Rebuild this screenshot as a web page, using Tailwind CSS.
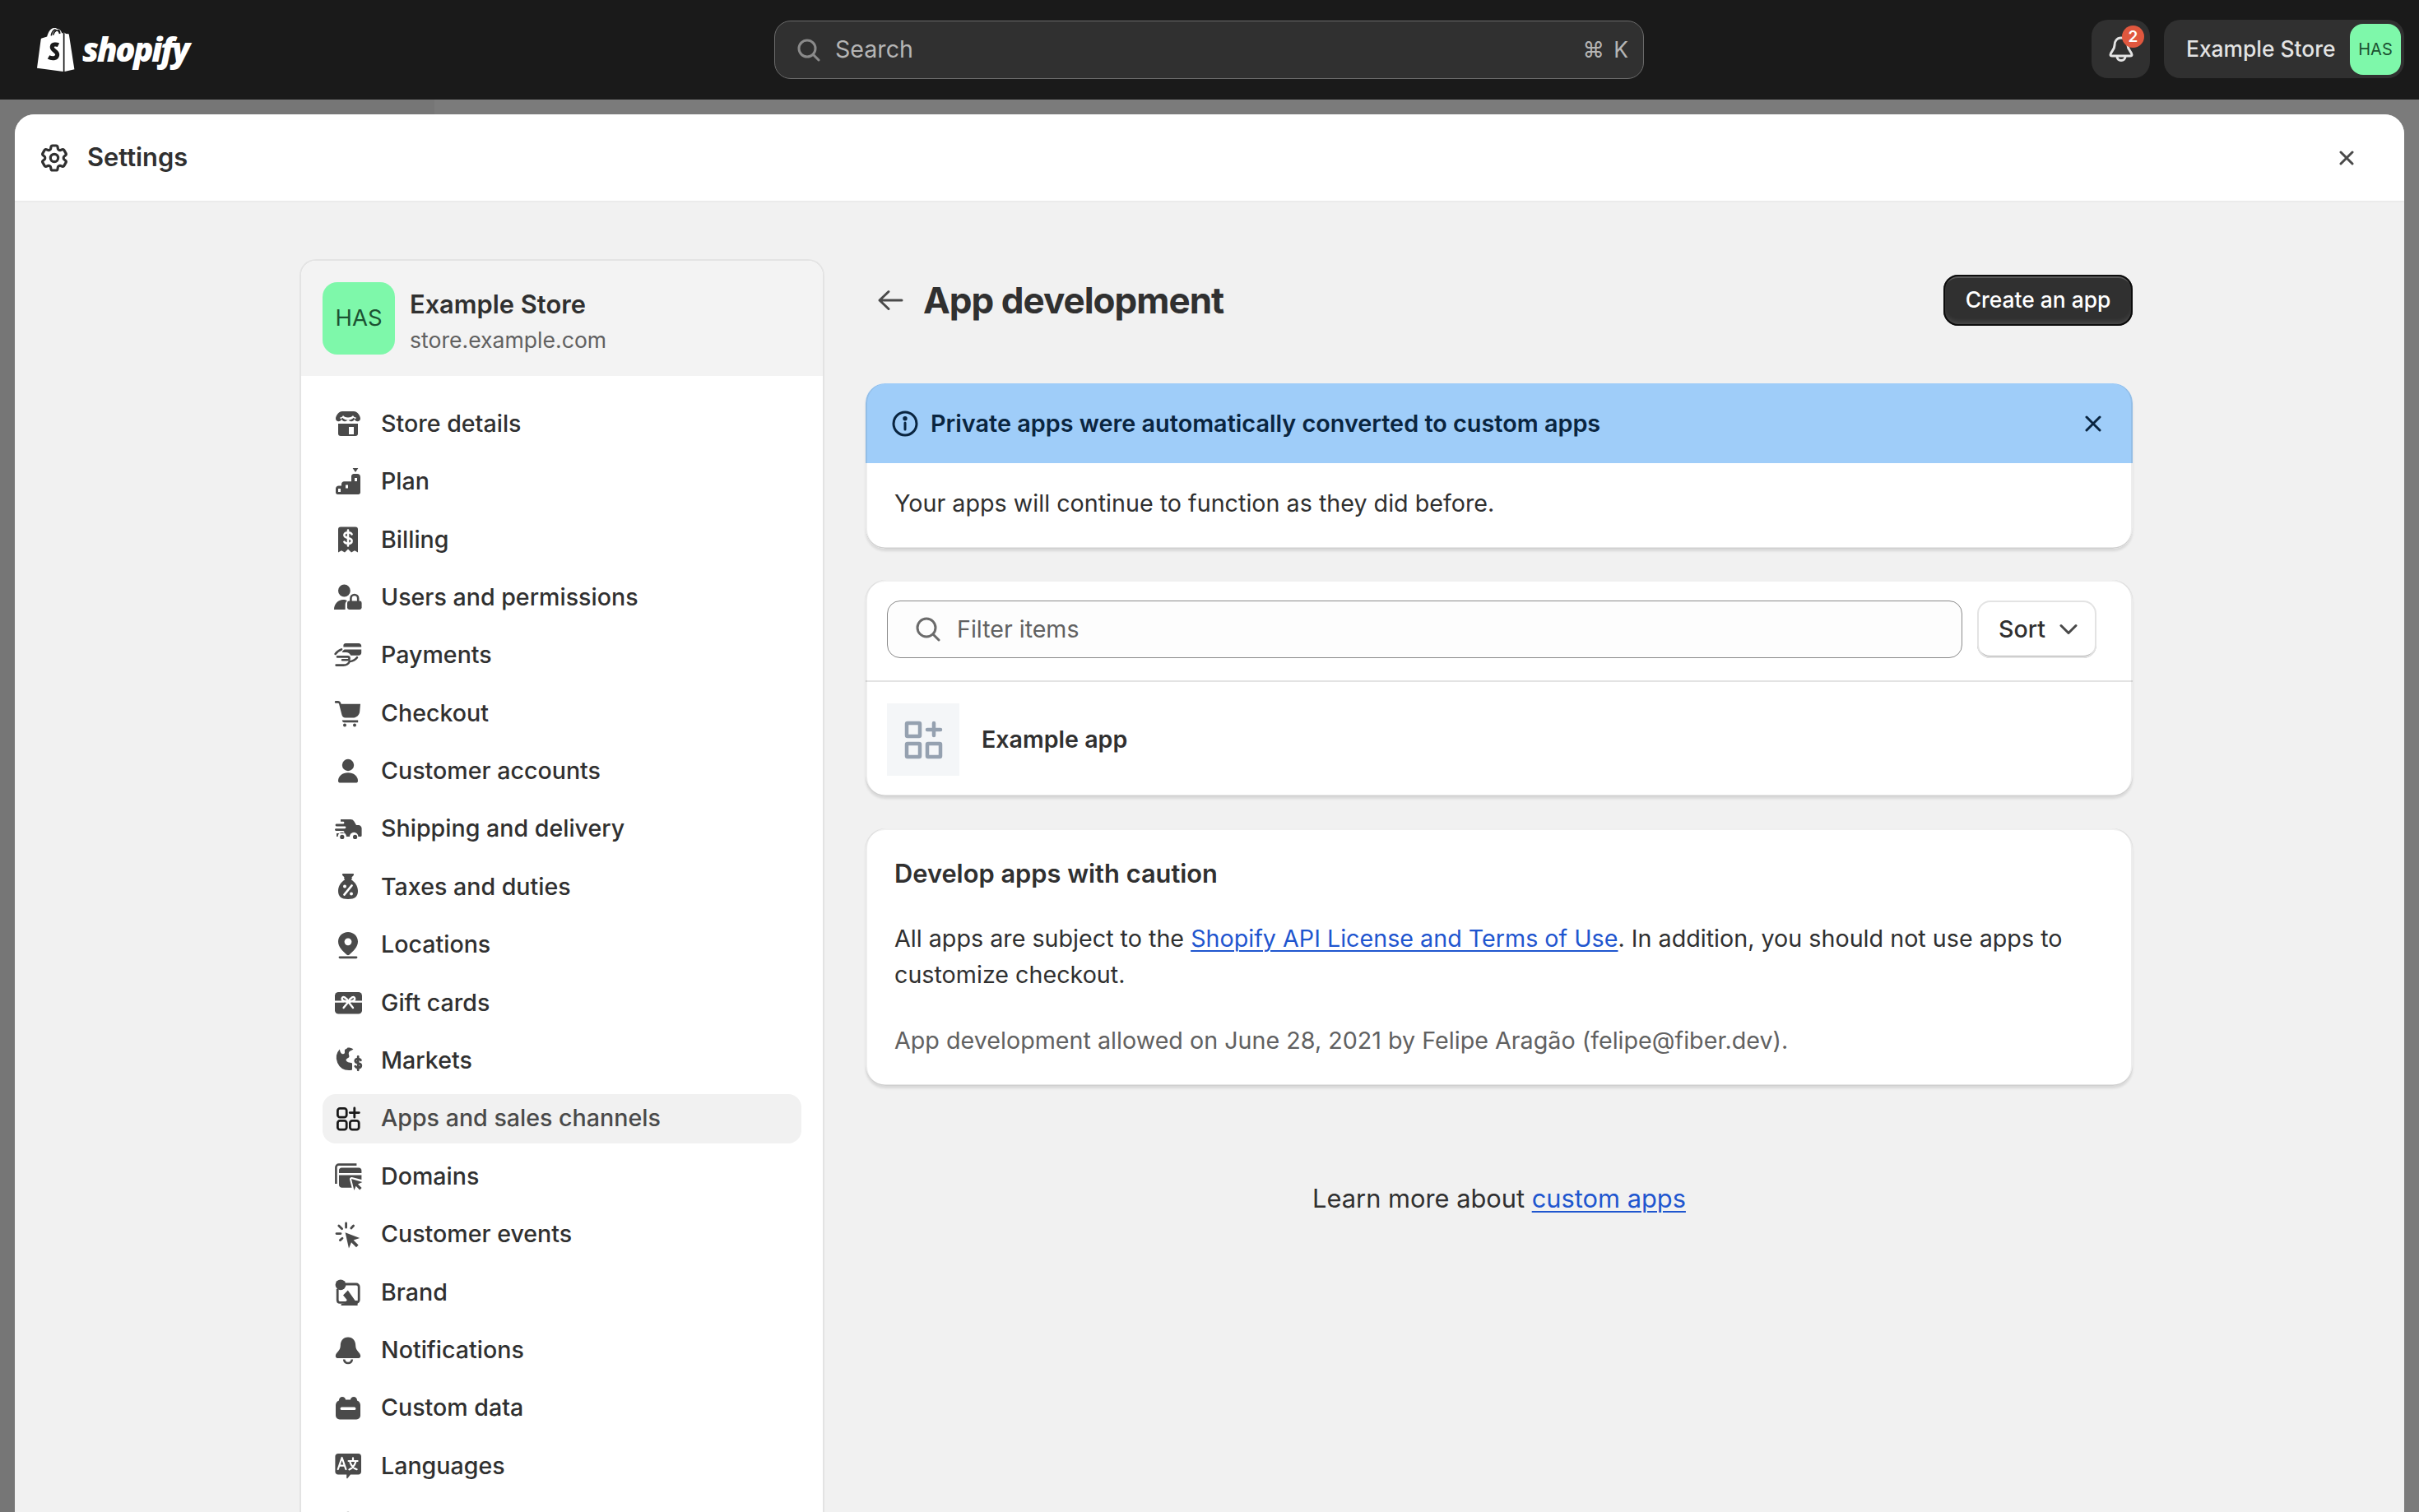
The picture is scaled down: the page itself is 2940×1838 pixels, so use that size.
<!DOCTYPE html>
<html lang="en">
<head>
<meta charset="utf-8">
<title>App development</title>
<script src="https://cdn.jsdelivr.net/npm/@tailwindcss/browser@4"></script>
</head>
<body class="w-[2940px] h-[1838px] overflow-hidden flex flex-col font-['Inter',sans-serif] text-[#303030] bg-[linear-gradient(to_right,#767676_528px,#7b7b7b_528px)]">

<header class="h-[121px] shrink-0 bg-[#1a1a1a] flex items-center relative">
  <div class="flex items-center pl-[44px] w-[941px] shrink-0">
    <svg class="w-[47px] h-[53px] -mt-[1px]" viewBox="0 0 47 53"><path fill="#fff" d="M34 5.800l-2.600.8C30.600 4 29 .9 25.400.9c-.1 0-.3 0-.4.1C24.300.100 23.300-.200 22.500-.100 16.800-.100 14 7 13.200 10.600l-5.600 1.700c-1.700.5-1.800.6-2 2.200L1 48.700l31.800 4.300V5.700z"/><path fill="#fff" d="M34.500 53L46.500 50.200c0 0-6.600-42.200-6.700-42.500-.1-.3-.3-.5-.6-.5l-3.200-.1-1.500-1.500z"/><path fill="none" stroke="#1a1a1a" stroke-width="1.600" d="M18.200 9.300C19 5.600 21 2.300 23.600 1.800M20.500 8.600c.8-2.800 2.300-5 4.300-5.900 2.100-.2 3.200 2.300 3.800 4.300M28.800 6.800c0-1.800-.5-3.600-1.600-4.900"/><path fill="none" stroke="#1a1a1a" stroke-width="5" d="M27 20.800c-2-1-7.400-1.700-7.800 2.200-.4 4.400 7 5 6.500 9.800-.5 4.700-6.800 4.800-10.700 2.600"/></svg>
    <span class="ml-[9px] -mt-[2px] text-[40px] leading-none font-[800] italic text-white tracking-[-2.300px] font-['Open_Sans',sans-serif]">shopify</span>
  </div>
  <div class="w-[1057px] h-[71px] rounded-[20px] bg-[#303030] border border-[#6b6b6b] flex items-center pl-[27px] pr-[16px] text-[#b5b5b5] text-[28.600px]">
    <svg class="w-[28px] h-[28px] mr-[18px]" viewBox="0 0 28 28" fill="none" stroke="#8a8a8a" stroke-width="3" stroke-linecap="round"><circle cx="12" cy="12" r="10"/><path d="M19.500 19.500L26 26"/></svg>
    <span class="-mt-[1px]">Search</span>
    <span class="ml-auto text-[26.400px] tracking-[2px]">⌘ K</span>
  </div>
  <div class="absolute left-[2542px] top-[24px] w-[71px] h-[71px] rounded-[20px] bg-[#303030] flex items-center justify-center">
    <svg class="w-[40px] h-[40px]" viewBox="0 0 40 40" fill="none" stroke="#e3e3e3" stroke-width="3" stroke-linejoin="round"><path d="M20 6c-5.500 0-8 4.500-8 9 0 6-5 8-5 11.500 0 1 .8 1.500 2 1.500h22c1.200 0 2-.5 2-1.500C33 23 28 21 28 15c0-4.500-2.500-9-8-9z"/><path d="M15 28.500c0 3 2.200 5 5 5s5-2 5-5"/></svg>
    <span class="absolute left-[37px] top-[7px] w-[27px] h-[27px] rounded-full bg-[#e0573e] text-white text-[19px] font-semibold leading-[27px] text-center">2</span>
  </div>
  <div class="absolute left-[2630px] top-[24px] w-[292px] h-[71px] rounded-[20px] bg-[#303030] flex items-center pl-[27px] pr-[4px] text-[#e3e3e3] text-[26.400px] font-[500]">
    <span>Example Store</span>
    <span class="ml-auto w-[62px] h-[62px] rounded-[16px] bg-[#7ef8aa] text-[#1c5232] text-[20px] font-[400] flex items-center justify-center">HAS</span>
  </div>
</header>

<div class="flex-1 min-h-0 pt-[18px] px-[18px]">
  <div class="h-full rounded-t-[24px] bg-[#f1f1f1] overflow-hidden flex flex-col">
    <div class="h-[107px] shrink-0 bg-white border-b-2 border-[#ebebeb] flex items-center pl-[28px] pr-[61px]">
      <svg class="w-[40px] h-[40px]" viewBox="0 0 24 24" fill="none" stroke="#303030" stroke-width="1.900"><path stroke-linejoin="round" d="M9.594 3.940c.09-.542.56-.94 1.110-.94h2.593c.55 0 1.020.398 1.110.94l.213 1.281c.063.374.313.686.645.870.074.04.147.083.22.127.325.196.72.257 1.075.124l1.217-.456a1.125 1.125 0 0 1 1.370.49l1.296 2.247a1.125 1.125 0 0 1-.26 1.431l-1.003.827c-.293.241-.438.613-.43.992a7.723 7.723 0 0 1 0 .255c-.008.378.137.75.43.991l1.004.827c.424.35.534.955.26 1.430l-1.298 2.247a1.125 1.125 0 0 1-1.369.491l-1.217-.456c-.355-.133-.75-.072-1.076.124a6.470 6.470 0 0 1-.22.128c-.331.183-.581.495-.644.869l-.213 1.281c-.09.543-.56.94-1.110.94h-2.594c-.55 0-1.019-.398-1.110-.94l-.213-1.281c-.062-.374-.312-.686-.644-.87a6.520 6.520 0 0 1-.22-.127c-.325-.196-.72-.257-1.076-.124l-1.217.456a1.125 1.125 0 0 1-1.369-.49l-1.297-2.247a1.125 1.125 0 0 1 .26-1.431l1.004-.827c.292-.24.437-.613.43-.991a6.932 6.932 0 0 1 0-.255c.007-.38-.138-.751-.43-.992l-1.004-.827a1.125 1.125 0 0 1-.26-1.430l1.297-2.247a1.125 1.125 0 0 1 1.370-.491l1.216.456c.356.133.751.072 1.076-.124.072-.044.146-.086.22-.128.332-.183.582-.495.644-.869l.214-1.280Z"/><circle cx="12" cy="12" r="2.800"/></svg>
      <span class="ml-[20px] text-[30.800px] font-[600]">Settings</span>
      <svg class="ml-auto w-[18px] h-[18px]" viewBox="0 0 18 18" stroke="#4a4a4a" stroke-width="3" stroke-linecap="round"><path d="M2 2l14 14M16 2L2 16"/></svg>
    </div>

    <div class="flex-1 min-h-0 flex pl-[346px] pt-[69px] gap-[50px]">
      <aside class="w-[638px] shrink-0 bg-white rounded-t-[20px] border-x-2 border-t-2 border-[#e3e3e3] overflow-hidden self-stretch h-[1600px]">
        <div class="h-[140px] bg-[#f3f3f3] flex items-center pl-[26px] gap-[18px]">
          <span class="w-[88px] h-[88px] rounded-[18px] bg-[#7ef8aa] text-[#1c5232] text-[27.500px] flex items-center justify-center">HAS</span>
          <div class="flex flex-col gap-[5px] pt-[7px]">
            <span class="text-[30.800px] leading-[40px] font-[600]">Example Store</span>
            <span class="text-[26.600px] leading-[36px] text-[#616161]">store.example.com</span>
          </div>
        </div>
        <nav class="flex flex-col gap-[10px] pt-[28px] px-[26px]">

          <a class="h-[60.400px] rounded-[16px] flex items-center pl-[11px] gap-[20px] text-[28.600px] font-[500]">
            <svg class="w-[40px] h-[40px] shrink-0 text-[#4a4a4a]" viewBox="0 0 20 20" fill="currentColor"><path d="M6.500 2.500h7c2 0 4 2.600 4 4.500 0 1-.8 1.600-1.700 1.600-.9 0-1.600-.5-1.900-1.400-.4.9-1 1.400-1.900 1.400s-1.600-.5-2-1.400c-.4.9-1.100 1.400-2 1.400s-1.500-.5-1.900-1.400c-.3.9-1 1.400-1.900 1.400-.9 0-1.700-.6-1.700-1.600 0-1.900 2-4.500 4-4.500z"/><path d="M4 10h12v6a1.500 1.500 0 0 1-1.500 1.500h-9A1.500 1.500 0 0 1 4 16z"/><path fill="#fff" d="M5 6.200c1 .2 1.500-.5 2-1.200.6.700 1.200 1.200 3 1.200 1.800 0 2.400-.5 3-1.200.5.700 1 1.400 2 1.200l-.5 1-1.200-.8c-.6.900-2 1.400-3.300 1.400S7.300 7.300 6.700 6.400l-1.200.8zM10.500 12h3v4.500h-3z"/></svg>
            Store details</a>

          <a class="h-[60.400px] rounded-[16px] flex items-center pl-[11px] gap-[20px] text-[28.600px] font-[500]">
            <svg class="w-[40px] h-[40px] shrink-0 text-[#4a4a4a]" viewBox="0 0 20 20" fill="currentColor"><path d="M12.800 1.500h3.400L14.500 4z"/><path fill-rule="evenodd" d="M13.500 5h2a2 2 0 0 1 2 2v9.300c0 .7-.5 1.200-1.200 1.200H3.700c-.7 0-1.200-.5-1.200-1.200V14c0-1 .8-1.800 1.800-1.800H6v-1c0-.9.7-1.600 1.600-1.600H12V6.500C12 5.700 12.700 5 13.500 5zM14 7.500v2h1.500v-2zM8.500 11.700v2H10v-2zM4 14v2h1.500v-2z"/></svg>
            Plan</a>

          <a class="h-[60.400px] rounded-[16px] flex items-center pl-[11px] gap-[20px] text-[28.600px] font-[500]">
            <svg class="w-[40px] h-[40px] shrink-0 text-[#4a4a4a]" viewBox="0 0 20 20" fill="currentColor"><path d="M5.500 2.300h9A1.500 1.500 0 0 1 16 3.800v14l-2-1.200-2 1.200-2-2-2 2-2-1.200-2 1.200v-14a1.500 1.500 0 0 1 1.500-1.500z"/><path fill="none" stroke="#fff" stroke-width="1.300" stroke-linecap="round" d="M12.300 6.700c-.3-.7-1.200-1.100-2.300-1.100-1.300 0-2.300.6-2.300 1.700 0 2.400 4.600 1 4.600 3.400 0 1.100-1 1.700-2.300 1.700-1.100 0-2-.4-2.300-1.100M10 4.300v9.400"/></svg>
            Billing</a>

          <a class="h-[60.400px] rounded-[16px] flex items-center pl-[11px] gap-[20px] text-[28.600px] font-[500]">
            <svg class="w-[40px] h-[40px] shrink-0 text-[#4a4a4a]" viewBox="0 0 20 20" fill="currentColor"><circle cx="7.700" cy="6" r="3.700"/><path d="M1.500 17.500c0-3.500 2.400-6 5.600-6 1 0 1.700.2 2.400.6-.7.500-1.200 1.300-1.200 2.400v3z"/><path fill="none" stroke="currentColor" stroke-width="1.300" d="M11.700 12.500V10.700a2.200 2.200 0 0 1 4.400 0v1.800"/><rect x="9.500" y="12.300" width="8.800" height="5.200" rx="1.200"/></svg>
            Users and permissions</a>

          <a class="h-[60.400px] rounded-[16px] flex items-center pl-[11px] gap-[20px] text-[28.600px] font-[500]">
            <svg class="w-[40px] h-[40px] shrink-0 text-[#4a4a4a]" viewBox="0 0 20 20" fill="currentColor"><path d="M7.200 3.800c0-.7.600-1.300 1.300-1.300h8c.9 0 1.600.7 1.600 1.600v.7H7.200zM7.800 6.300h10.300v2c0 .9-.7 1.600-1.600 1.600h-4.900c-.4-1.100-1.500-1.900-2.800-1.900H6.300c.3-.7.800-1.300 1.500-1.700z"/><path fill="none" stroke="currentColor" stroke-width="1.300" stroke-linecap="round" stroke-linejoin="round" d="M2.300 9c1-1.500 2.200-2.300 3.700-2.800M3.500 10.700h6.300c1.300 0 1.300 1.900 0 1.900H6.500M11 13.500c2-.1 3.200-.7 4.500-2.400M2.800 15.800h4.400c1.700 0 3-.7 3.800-2.300"/></svg>
            Payments</a>

          <a class="h-[60.400px] rounded-[16px] flex items-center pl-[11px] gap-[20px] text-[28.600px] font-[500]">
            <svg class="w-[40px] h-[40px] shrink-0 text-[#4a4a4a]" viewBox="0 0 20 20" fill="currentColor"><path d="M2.600 2.500h1.300c.8 0 1.500.5 1.700 1.300l.2.600h11.700l-.4 4.600c-.2 2.200-2 3.800-4.200 3.800H8.400c-1.100 0-2-.8-2.200-1.900L4.500 4.300c-.1-.2-.3-.4-.6-.4H2.600a.7.7 0 0 1 0-1.400z"/><path d="M6.400 14.300h9.700v1.300H7.500a1.200 1.200 0 0 1-1.100-1.300z"/><circle cx="8" cy="17.300" r="1"/><circle cx="14" cy="17.300" r="1"/></svg>
            Checkout</a>

          <a class="h-[60.400px] rounded-[16px] flex items-center pl-[11px] gap-[20px] text-[28.600px] font-[500]">
            <svg class="w-[40px] h-[40px] shrink-0 text-[#4a4a4a]" viewBox="0 0 20 20" fill="currentColor"><circle cx="10" cy="6" r="3.600"/><path d="M4 15.600c0-3 2.700-5 6-5s6 2 6 5c0 .8-.5 1.200-1.300 1.200H5.300c-.8 0-1.300-.4-1.300-1.200z"/></svg>
            Customer accounts</a>

          <a class="h-[60.400px] rounded-[16px] flex items-center pl-[11px] gap-[20px] text-[28.600px] font-[500]">
            <svg class="w-[40px] h-[40px] shrink-0 text-[#4a4a4a]" viewBox="0 0 20 20" fill="currentColor"><path d="M5.500 4h6c1 0 1.700.4 2.200 1.300l1.300 2.200h1.300c1.100 0 2 .9 2 2v4.200c0 .5-.4.8-.8.8h-1.300a2.600 2.600 0 0 0-5.200 0H9a2.600 2.600 0 0 0-5.200 0H3V12.500h4a.7.700 0 0 0 0-1.500H2.700a.7.700 0 0 1 0-1.400H8a.7.700 0 0 0 0-1.400H3a.7.700 0 0 1 0-1.400h4a.7.700 0 0 0 0-1.400H5.500z"/><circle cx="6.400" cy="14.700" r="1.300"/><circle cx="14.300" cy="14.700" r="1.300"/></svg>
            Shipping and delivery</a>

          <a class="h-[60.400px] rounded-[16px] flex items-center pl-[11px] gap-[20px] text-[28.600px] font-[500]">
            <svg class="w-[40px] h-[40px] shrink-0 text-[#4a4a4a]" viewBox="0 0 20 20" fill="currentColor"><path d="M7 2h6c.6 0 .7.7.3 1.100L12.200 4.300c.3.3.3.700 0 1L12 5.800c2.200 1.300 4 3.800 4 6.700 0 3.500-2 5-6 5s-6-1.500-6-5c0-2.900 1.800-5.400 4-6.700l-.2-.5c-.3-.3-.3-.7 0-1L6.700 3.100C6.300 2.700 6.400 2 7 2z"/><path fill="none" stroke="#fff" stroke-width="1.300" stroke-linecap="round" d="M12.300 9.200l-4.600 5.600"/><circle cx="8" cy="9.800" r="1" fill="#fff"/><circle cx="12" cy="14.200" r="1" fill="#fff"/></svg>
            Taxes and duties</a>

          <a class="h-[60.400px] rounded-[16px] flex items-center pl-[11px] gap-[20px] text-[28.600px] font-[500]">
            <svg class="w-[40px] h-[40px] shrink-0 text-[#4a4a4a]" viewBox="0 0 20 20" fill="currentColor"><path fill-rule="evenodd" d="M10 2c3.300 0 6 2.500 6 5.800 0 3.300-2.900 6-5.300 8.100-.4.300-1 .3-1.400 0C6.900 13.800 4 11.100 4 7.800 4 4.500 6.700 2 10 2zm0 3.700a2.200 2.200 0 1 0 0 4.400 2.200 2.200 0 0 0 0-4.400z"/><rect x="4.300" y="16.700" width="11.400" height="1.400" rx=".7"/></svg>
            Locations</a>

          <a class="h-[60.400px] rounded-[16px] flex items-center pl-[11px] gap-[20px] text-[28.600px] font-[500]">
            <svg class="w-[40px] h-[40px] shrink-0 text-[#4a4a4a]" viewBox="0 0 20 20" fill="currentColor"><rect x="2" y="3.500" width="16.500" height="13.300" rx="2.200"/><path fill="none" stroke="#fff" stroke-width="1.200" stroke-linecap="round" stroke-linejoin="round" d="M2 9.300h5.500M13 9.300h5.500M10.200 9.500c-1.200-2.800-3.600-3.900-3.900-2.200-.2 1.300 1.900 2 3.900 2.200zm0 0c1.200-2.800 3.600-3.900 3.900-2.200.2 1.300-1.900 2-3.900 2.200zm0 0L7.300 13M10.200 9.500L13 13"/></svg>
            Gift cards</a>

          <a class="h-[60.400px] rounded-[16px] flex items-center pl-[11px] gap-[20px] text-[28.600px] font-[500]">
            <svg class="w-[40px] h-[40px] shrink-0 text-[#4a4a4a]" viewBox="0 0 20 20" fill="currentColor"><path d="M10 2.300c1.200 0 2.300.3 3.200.9-.9.900-2.300.9-2.700 1.900-.4 1 .3 1.700.2 2.700-.1.700-1.200.9-1.700 1.500-.6.700.2 1.500 1 1.800.8.300 1.700.2 2.500.6v4c-.6.200-1.300.3-2 .3a7.600 7.600 0 0 1-5.600-12.700c.3 1 .3 2.100 1.300 2.700.6.300 1.400.1 1.700-.4.300-.6-.1-1.300.1-1.900.2-.6.900-.7 1.300-1 .3-.2.400-.3.500-.4z"/><path fill="none" stroke="currentColor" stroke-width="1.400" stroke-linecap="round" d="M17.700 9.900c-.3-.5-.9-.8-1.600-.8-1 0-1.700.5-1.700 1.300 0 1.800 3.500.8 3.500 2.700 0 .9-.8 1.400-1.800 1.400-.7 0-1.400-.3-1.700-.9M16.100 7.700v8.200"/></svg>
            Markets</a>

          <a class="h-[60.400px] rounded-[16px] bg-[#f1f1f1] flex items-center pl-[11px] gap-[20px] text-[28.600px] font-[500] text-[#4a4a4a]">
            <svg class="w-[40px] h-[40px] shrink-0" viewBox="0 0 20 20" fill="none" stroke="#1a1a1a" stroke-width="1.400" stroke-linecap="round"><rect x="3.700" y="3.700" width="5.400" height="5.400" rx="1.400"/><rect x="3.700" y="11.200" width="5.400" height="5.400" rx="1.400"/><rect x="11.200" y="11.200" width="5.400" height="5.400" rx="1.400"/><path d="M13.900 3.500v5.600M11.100 6.300h5.600"/></svg>
            Apps and sales channels</a>

          <a class="h-[60.400px] rounded-[16px] flex items-center pl-[11px] gap-[20px] text-[28.600px] font-[500]">
            <svg class="w-[40px] h-[40px] shrink-0 text-[#4a4a4a]" viewBox="0 0 20 20" fill="currentColor"><path fill="none" stroke="currentColor" stroke-width="1.300" d="M2.700 14.500V4.500c0-1 .7-1.700 1.700-1.700h10.800"/><path d="M6 4.800h10.500c1 0 1.700.8 1.700 1.700V8H4.500V6.300c0-.8.700-1.500 1.500-1.500z"/><path d="M4.500 9.300h13.700v2.700l-5.800-1.500c-.8-.2-1.600.6-1.400 1.400l1.300 5H6.300c-1 0-1.800-.8-1.800-1.800z"/><path d="M12 11.500l6.700 2-2.700 1.200 2.300 2.300-1.200 1.200-2.300-2.300-1.100 2.600z"/></svg>
            Domains</a>

          <a class="h-[60.400px] rounded-[16px] flex items-center pl-[11px] gap-[20px] text-[28.600px] font-[500]">
            <svg class="w-[40px] h-[40px] shrink-0 text-[#4a4a4a]" viewBox="0 0 20 20" fill="currentColor"><path d="M8.300 8.600l8.800 3.400-3.800 1.300 3 3-1.300 1.300-3-3-1.500 3.600z"/><path fill="none" stroke="currentColor" stroke-width="1.400" stroke-linecap="round" d="M8.800 3v2.600M4.400 4.500l1.900 1.900M3 9.300h2.500M13.300 4.500l-1.400 1.500M5.200 13.300l1.300-1.200"/></svg>
            Customer events</a>

          <a class="h-[60.400px] rounded-[16px] flex items-center pl-[11px] gap-[20px] text-[28.600px] font-[500]">
            <svg class="w-[40px] h-[40px] shrink-0 text-[#4a4a4a]" viewBox="0 0 20 20" fill="currentColor"><circle cx="5.500" cy="5.400" r="3.200"/><path fill="none" stroke="currentColor" stroke-width="1.400" stroke-linejoin="round" d="M8 5h7c.9 0 1.600.7 1.600 1.600v8c0 .9-.7 1.600-1.600 1.600H5c-.8 0-1.400-.7-1.400-1.600V8"/><path d="M9.900 8.800l4.400 6.200h1.500v3H5.800v-.9l2.100-.5c.3-.7 1-1.300 1.500-2L7 11.800z"/></svg>
            Brand</a>

          <a class="h-[60.400px] rounded-[16px] flex items-center pl-[11px] gap-[20px] text-[28.600px] font-[500]">
            <svg class="w-[40px] h-[40px] shrink-0 text-[#4a4a4a]" viewBox="0 0 20 20" fill="currentColor"><path d="M10 2.300c-3 0-4.600 2.400-4.600 5.100 0 3.300-3 4.200-3 6.300 0 .8.700 1.300 1.700 1.300h11.800c1 0 1.700-.5 1.700-1.300 0-2.100-3-3-3-6.300 0-2.700-1.600-5.100-4.600-5.100z"/><path fill="none" stroke="currentColor" stroke-width="1.300" d="M7.600 15.800c0 1.200 1 2.200 2.400 2.200s2.400-1 2.400-2.200"/></svg>
            Notifications</a>

          <a class="h-[60.400px] rounded-[16px] flex items-center pl-[11px] gap-[20px] text-[28.600px] font-[500]">
            <svg class="w-[40px] h-[40px] shrink-0 text-[#4a4a4a]" viewBox="0 0 20 20" fill="currentColor"><path d="M6.500 3c1.100 0 1.900.7 2 1.800h3c.1-1.100.9-1.800 2-1.800s2 .9 2 2v.2c1.100.4 2 1.400 2 2.800v6.300c0 1.400-1 2.400-2.400 2.400H4.900c-1.400 0-2.400-1-2.400-2.400V8c0-1.400.9-2.400 2-2.800V5c0-1.100.9-2 2-2z"/><rect x="5.300" y="9.300" width="9.400" height="1.700" rx=".8" fill="#fff"/></svg>
            Custom data</a>

          <a class="h-[60.400px] rounded-[16px] flex items-center pl-[11px] gap-[20px] text-[28.600px] font-[500]">
            <svg class="w-[40px] h-[40px] shrink-0 text-[#4a4a4a]" viewBox="0 0 20 20" fill="currentColor"><path d="M4 2.500h12.300c1 0 1.700.8 1.700 1.700v9.300c0 1-.8 1.800-1.700 1.800h-4.800L9.700 17.500c-.2.200-.6.100-.6-.2v-2H4c-1 0-1.800-.8-1.800-1.800V4.200c0-1 .8-1.700 1.800-1.700z"/><path fill="none" stroke="#fff" stroke-width="1.100" stroke-linecap="round" stroke-linejoin="round" d="M3.900 12l2.400-7 2.400 7M4.800 9.800h3.100M10.300 7h5.500M13 5.200V7M14.700 7c-.5 2.700-2 4.300-4 5.200M11.300 7.800c.6 2 2 3.600 4 4.300"/></svg>
            Languages</a>

          <div class="h-[60.400px] flex items-center pl-[11px]">
            <svg class="w-[40px] h-[40px] shrink-0 text-[#4a4a4a]" viewBox="0 0 20 20" fill="currentColor"><circle cx="10" cy="6" r="3.600"/></svg>
          </div>
        </nav>
      </aside>

      <main class="w-[1540px] shrink-0 pt-[19px]">
        <div class="h-[62px] flex items-center">
          <svg class="ml-[14px] w-[32px] h-[32px] text-[#4a4a4a]" viewBox="0 0 32 32" fill="none" stroke="currentColor" stroke-width="3" stroke-linecap="round" stroke-linejoin="round"><path d="M30 16H3M14 5.500L3 16l11 10.500"/></svg>
          <h1 class="ml-[24px] text-[44px] font-[650] tracking-[-1px]">App development</h1>
          <button class="ml-auto w-[230px] h-[62px] rounded-[18px] bg-[#303030] text-white text-[26.400px] font-[500] shadow-[inset_0_0_0_2px_#0c0c0c,inset_0_4px_0_0_rgba(255,255,255,.2),inset_0_-6px_6px_-2px_rgba(255,255,255,.16)]">Create an app</button>
        </div>

        <section class="mt-[70px] h-[201px] rounded-[24px] bg-white overflow-hidden relative shadow-[0_3px_3px_rgba(0,0,0,.1)] after:absolute after:inset-0 after:rounded-[24px] after:pointer-events-none after:shadow-[inset_0_-1.500px_0_0_#cfcfcf,inset_2px_0_0_0_rgba(0,0,0,.07),inset_-2px_0_0_0_rgba(0,0,0,.07)]">
          <div class="h-[97px] bg-[#9fcdf9] flex items-center pl-[32px] pr-[38px] text-[#0a2540]">
            <svg class="w-[32px] h-[32px]" viewBox="0 0 32 32" fill="none" stroke="currentColor" stroke-width="3" stroke-linecap="round"><circle cx="16" cy="16" r="14"/><path d="M16 15v8"/><circle cx="16" cy="9.800" r="1.200" fill="currentColor"/></svg>
            <span class="ml-[15px] text-[28.800px] font-[600]">Private apps were automatically converted to custom apps</span>
            <svg class="ml-auto w-[20px] h-[20px]" viewBox="0 0 20 20" stroke="currentColor" stroke-width="3" stroke-linecap="round"><path d="M2 2l16 16M18 2L2 18"/></svg>
          </div>
          <p class="pl-[35px] pt-[27px] text-[28.700px] leading-[44px]">Your apps will continue to function as they did before.</p>
        </section>

        <section class="mt-[38px] h-[263px] rounded-[24px] bg-white relative shadow-[0_3px_3px_rgba(0,0,0,.1)] after:absolute after:inset-0 after:rounded-[24px] after:pointer-events-none after:shadow-[inset_0_-1.500px_0_0_#cfcfcf,inset_2px_0_0_0_rgba(0,0,0,.07),inset_-2px_0_0_0_rgba(0,0,0,.07),inset_0_2px_0_0_rgba(0,0,0,.06)]">
          <div class="h-[124px] pt-[25px] pl-[26px] flex items-start border-b-2 border-[#e3e3e3]">
            <div class="w-[1307px] h-[70px] rounded-[16px] border border-[#8a8a8a] bg-[#fdfdfd] flex items-center pl-[34px] text-[28.600px] text-[#616161]">
              <svg class="w-[30px] h-[30px] text-[#6b6b6b]" viewBox="0 0 30 30" fill="none" stroke="currentColor" stroke-width="3" stroke-linecap="round"><circle cx="13" cy="13" r="11"/><path d="M21 21l7 7"/></svg>
              <span class="ml-[20px]">Filter items</span>
            </div>
            <button class="ml-[18px] w-[145px] h-[70px] rounded-[16px] bg-white flex items-center pl-[26px] text-[28.600px] font-[500] shadow-[inset_0_0_0_2px_#e3e3e3,inset_0_-3px_0_0_#b5b5b5]">Sort
              <svg class="ml-[17px] w-[22px] h-[14px] text-[#4a4a4a]" viewBox="0 0 22 14" fill="none" stroke="currentColor" stroke-width="3" stroke-linecap="round" stroke-linejoin="round"><path d="M2 2.500l9 9 9-9"/></svg>
            </button>
          </div>
          <div class="flex items-center pl-[26px] pt-[26px]">
            <div class="w-[88px] h-[88px] bg-[#f4f6f8]">
              <svg class="w-[88px] h-[88px]" viewBox="0 0 88 88" fill="none" stroke="#95a1b0" stroke-width="4.500" stroke-linecap="round"><rect x="24" y="24" width="16" height="16" rx="1"/><rect x="24" y="49" width="16" height="16" rx="1"/><rect x="49" y="49" width="16" height="16" rx="1"/><path d="M57 24v15M49 32h16"/></svg>
            </div>
            <span class="ml-[27px] text-[28.600px] font-[600]">Example app</span>
          </div>
        </section>

        <section class="mt-[39px] h-[313px] rounded-[24px] bg-white pl-[35px] pr-[70px] pt-[33px] relative shadow-[0_3px_3px_rgba(0,0,0,.1)] after:absolute after:inset-0 after:rounded-[24px] after:pointer-events-none after:shadow-[inset_0_-1.500px_0_0_#cfcfcf,inset_2px_0_0_0_rgba(0,0,0,.07),inset_-2px_0_0_0_rgba(0,0,0,.07),inset_0_2px_0_0_rgba(0,0,0,.06)]">
          <h2 class="text-[30.800px] leading-[44px] font-[600]">Develop apps with caution</h2>
          <p class="mt-[35px] text-[28.700px] leading-[44px]">All apps are subject to the <a class="text-[#1f56cf] underline decoration-2 underline-offset-[4px]">Shopify API License and Terms of Use</a>. In addition, you should not use apps to customize checkout.</p>
          <p class="mt-[36px] text-[28.700px] leading-[44px] text-[#616161]">App development allowed on June 28, 2021 by Felipe Aragão (felipe@fiber.dev).</p>
        </section>

        <p class="mt-[115px] text-center text-[30.800px] leading-[44px]">Learn more about <a class="text-[#1f56cf] underline decoration-2 underline-offset-[4px]">custom apps</a></p>
      </main>
    </div>
  </div>
</div>
</body>
</html>
